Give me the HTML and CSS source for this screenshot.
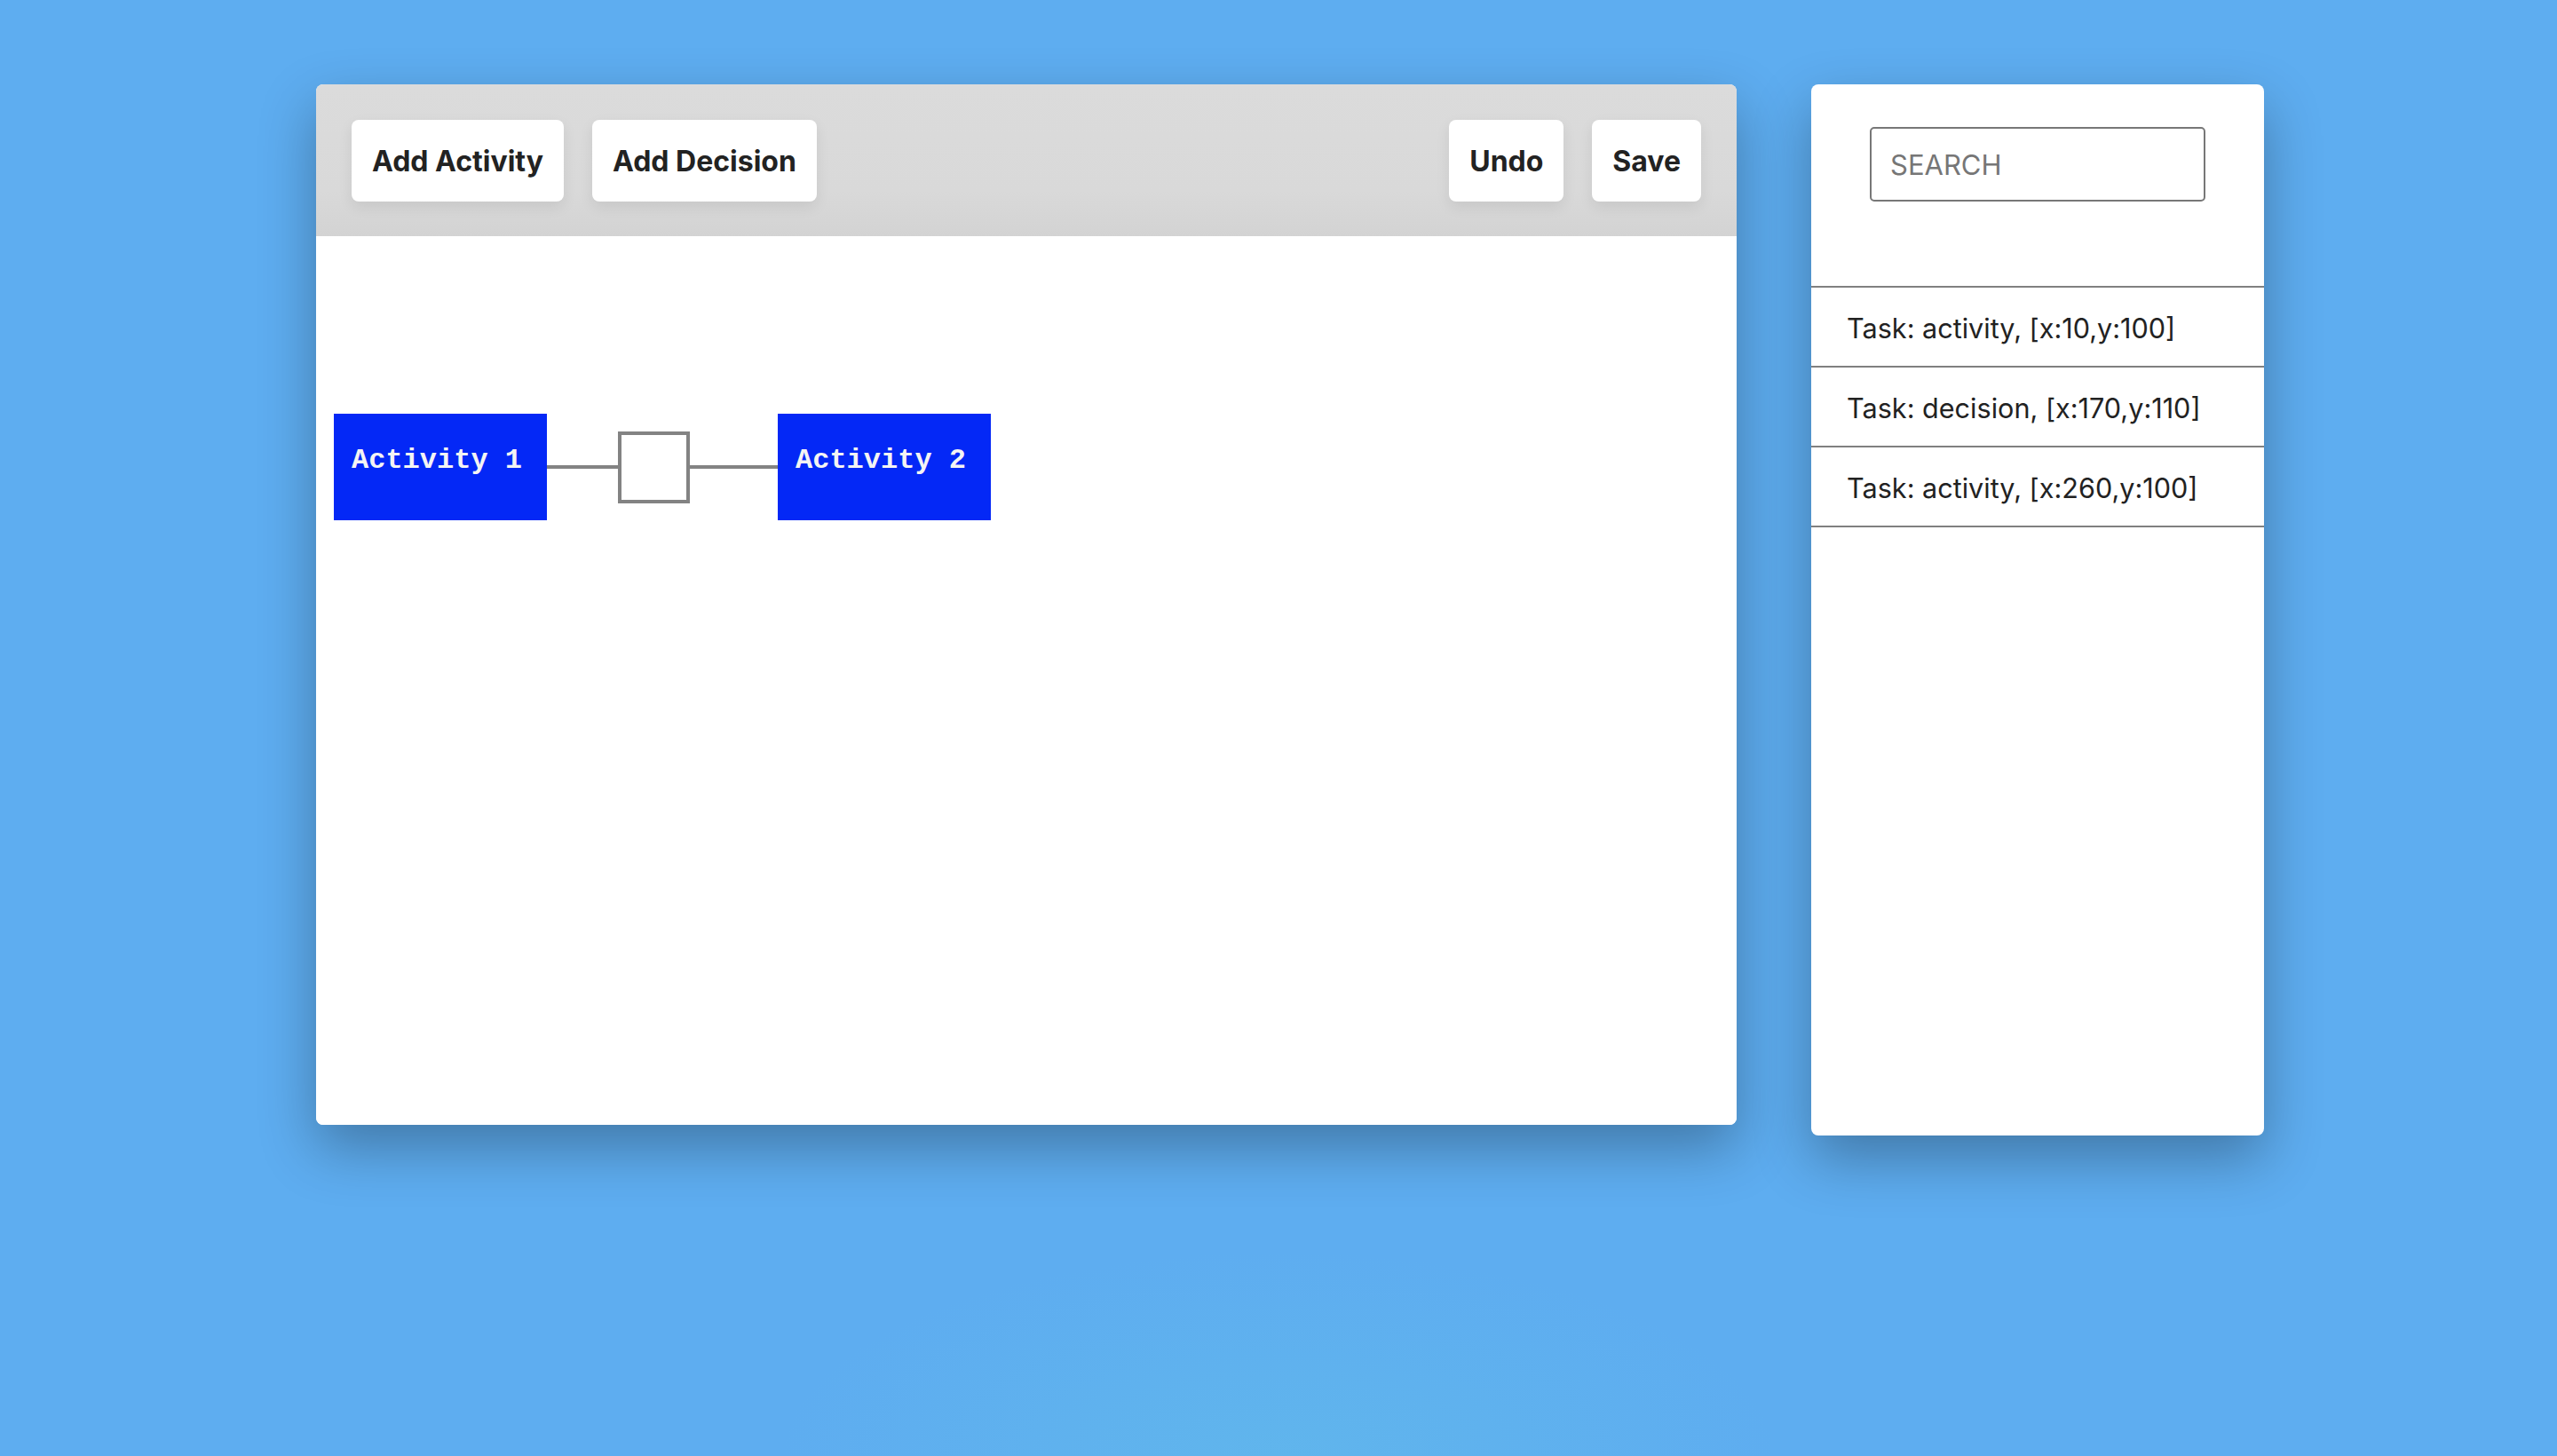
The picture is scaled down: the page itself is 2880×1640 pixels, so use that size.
FILE: index.html
```html
<!DOCTYPE html>
<html lang="en">
<head>
<meta charset="utf-8">
<title>Workflow Editor</title>
<link rel="stylesheet" href="styles.css">
</head>
<body>
<div class="app">
  <section class="editor">
    <div class="toolbar">
      <div class="toolbar-group">
        <button class="btn">Add Activity</button>
        <button class="btn">Add Decision</button>
      </div>
      <div class="toolbar-group">
        <button class="btn">Undo</button>
        <button class="btn">Save</button>
      </div>
    </div>
    <div class="canvas">
      <svg class="diagram" width="1600" height="1001" viewBox="0 0 1600 1001">
        <line class="edge" x1="260" y1="260" x2="342" y2="260"/>
        <line class="edge" x1="419" y1="260" x2="520" y2="260"/>
        <rect class="activity" x="20" y="200" width="240" height="120"/>
        <text class="activity-label" x="40" y="261">Activity 1</text>
        <rect class="decision" x="342" y="222" width="77" height="77"/>
        <rect class="activity" x="520" y="200" width="240" height="120"/>
        <text class="activity-label" x="540" y="261">Activity 2</text>
      </svg>
    </div>
  </section>
  <aside class="sidebar">
    <div class="search-area">
      <input class="search" type="text" placeholder="SEARCH">
    </div>
    <ul class="tasks">
      <li class="task">Task: activity, [x:10,y:100]</li>
      <li class="task">Task: decision, [x:170,y:110]</li>
      <li class="task">Task: activity, [x:260,y:100]</li>
    </ul>
  </aside>
</div>
</body>
</html>
```
FILE: styles.css
```css
* { box-sizing: border-box; }

html, body {
  margin: 0;
  height: 100%;
}

body {
  background-color: #5eadf0;
  background-image: radial-gradient(ellipse 560px 230px at 50% 100%, rgba(96, 182, 236, 0.9), rgba(96, 182, 236, 0) 100%);
  font-family: Inter, "Noto Sans", sans-serif;
  color: #222;
  overflow: hidden;
}

.app {
  display: flex;
  align-items: flex-start;
  gap: 84px;
  padding: 95px 0 0 356px;
}

.editor {
  width: 1600px;
  height: 1172px;
  background: #fff;
  border-radius: 8px;
  overflow: hidden;
  display: flex;
  flex-direction: column;
  box-shadow: 0 26px 64px rgba(0, 0, 0, 0.3);
}

.toolbar {
  height: 171px;
  flex: none;
  display: flex;
  justify-content: space-between;
  align-items: flex-start;
  padding: 40px 40px 0 40px;
  background: linear-gradient(#dbdbdb 0%, #d9d9d9 70%, #d3d3d3 100%);
}

.toolbar-group {
  display: flex;
  gap: 32px;
}

.btn {
  height: 92px;
  padding: 0 23px;
  border: none;
  border-radius: 8px;
  background: #fff;
  color: #222;
  font-family: Inter, "Noto Sans", sans-serif;
  font-weight: 700;
  font-size: 32px;
  box-shadow: 0 6px 16px rgba(0, 0, 0, 0.08);
}

.canvas {
  flex: 1;
  background: #fff;
}

.diagram {
  display: block;
}

.edge {
  stroke: #838383;
  stroke-width: 4;
}

.activity {
  fill: #0428f6;
}

.decision {
  fill: #fff;
  stroke: #838383;
  stroke-width: 4;
}

.activity-label {
  fill: #f4f4f4;
  font-family: "Liberation Mono", "Courier New", monospace;
  font-weight: 700;
  font-size: 32px;
}

.sidebar {
  width: 510px;
  height: 1184px;
  background: #fff;
  border-radius: 8px;
  box-shadow: 0 26px 64px rgba(0, 0, 0, 0.3);
  overflow: hidden;
}

.search-area {
  height: 229px;
  padding-top: 48px;
  display: flex;
  justify-content: center;
  border-bottom: 2px solid #808080;
}

.search {
  width: 378px;
  height: 84px;
  border: 2px solid #777;
  border-radius: 5px;
  padding: 0 21px;
  font-family: Inter, "Noto Sans", sans-serif;
  font-size: 31px;
  color: #222;
  background: #fff;
  outline: none;
}

.search::placeholder {
  color: #767676;
}

.tasks {
  list-style: none;
  margin: 0;
  padding: 0;
}

.task {
  height: 90px;
  display: flex;
  align-items: center;
  padding: 2px 40px 0;
  border-bottom: 2px solid #808080;
  font-size: 30.6px;
  color: #222;
}
```
